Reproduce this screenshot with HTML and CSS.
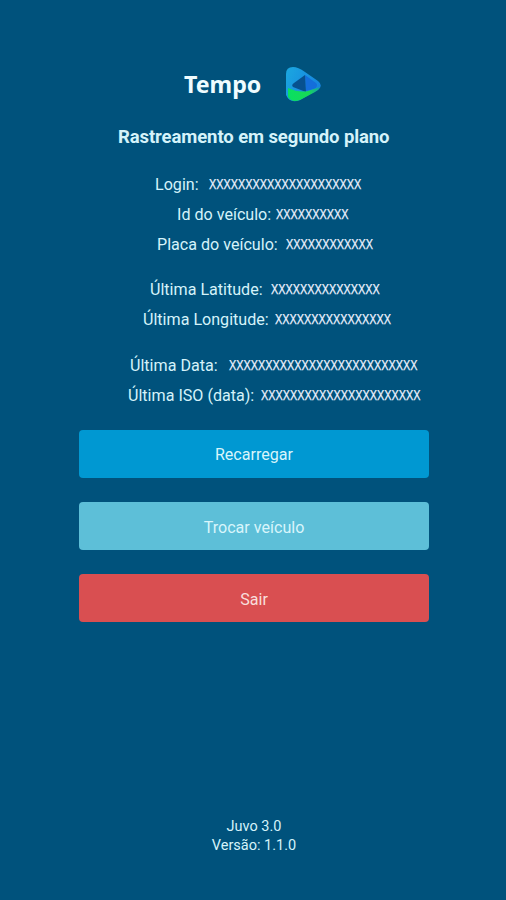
FILE: index.html
```html
<!DOCTYPE html>
<html lang="pt-BR">
<head>
<meta charset="utf-8">
<title>Tempo</title>
<link rel="stylesheet" href="styles.css">
</head>
<body>
<main class="screen">
  <header class="brand">
    <h1 class="brand-name">Tempo</h1>
    <svg class="logo" width="37" height="38" viewBox="0 0 37 38">
      <defs>
        <linearGradient id="sky" x1="0" y1="0" x2="1" y2="0.5"><stop offset="0" stop-color="#1ba8e0"/><stop offset="1" stop-color="#1683df"/></linearGradient>
        <linearGradient id="leaf" x1="0" y1="0" x2="1" y2="0"><stop offset="0" stop-color="#08df62"/><stop offset="0.65" stop-color="#18da55"/><stop offset="1" stop-color="#169dad"/></linearGradient>
      </defs>
      <path fill="url(#sky)" d="M1 8Q1 1 8 1Q13 1 20 6L33 15Q38 19 34 23L15 34Q5 38 1 29Z"/>
      <path fill="#146edb" d="M20 9L31 17Q34 20 29 23L21 25Z"/>
      <path fill="#07518f" d="M20 9L21 26L8 21Q6 19 9 17Z"/>
      <path fill="url(#leaf)" d="M3 22Q14 27 23 25L35 21Q34 24 30 26L15 34Q7 37 3 31Z"/>
    </svg>
  </header>
  <h2 class="subtitle">Rastreamento em segundo plano</h2>
  <dl class="details">
    <div class="row login"><dt>Login:</dt><dd>XXXXXXXXXXXXXXXXXXXXX</dd></div>
    <div class="row vehicle"><dt>Id do veículo:</dt><dd>XXXXXXXXXX</dd></div>
    <div class="row plate"><dt>Placa do veículo:</dt><dd>XXXXXXXXXXXX</dd></div>
    <div class="row latitude"><dt>Última Latitude:</dt><dd>XXXXXXXXXXXXXXX</dd></div>
    <div class="row longitude"><dt>Última Longitude:</dt><dd>XXXXXXXXXXXXXXXX</dd></div>
    <div class="row date"><dt>Última Data:</dt><dd>XXXXXXXXXXXXXXXXXXXXXXXXXX</dd></div>
    <div class="row iso"><dt>Última ISO (data):</dt><dd>XXXXXXXXXXXXXXXXXXXXXX</dd></div>
  </dl>
  <div class="actions">
    <button class="button reload">Recarregar</button>
    <button class="button change">Trocar veículo</button>
    <button class="button exit">Sair</button>
  </div>
  <footer class="version"><div>Juvo 3.0</div><div>Versão: 1.1.0</div></footer>
</main>
</body>
</html>
```
FILE: styles.css
```css
* { box-sizing: border-box; }
body { margin: 0; background: #00527c; color: #d5f3fa; font-family: Roboto, sans-serif; }
.screen { height: 900px; display: flex; flex-direction: column; }
.brand { display: flex; align-items: center; height: 38px; margin: 66px 0 0 184px; gap: 24px; }
.brand-name { margin: 0; font: 700 23.2px/36px "Noto Sans", sans-serif; color: #effcff; width: 77px; height: 38px; white-space: nowrap; }
.logo { flex: none; }
.subtitle { margin: 18px 0 0 118px; font-size: 18.5px; line-height: 30px; font-weight: 700; white-space: nowrap; letter-spacing: -0.1px; }
.details { margin: 18px 0 0; }
.row { display: flex; height: 29.8px; line-height: 29.8px; white-space: nowrap; }
dt { font-size: 16.1px; flex: none; }
dd { margin: 0; font: 14.5px/28px "Liberation Sans", sans-serif; color: #eef2ff; -webkit-text-stroke: 0.25px #eef2ff; transform: scaleX(0.75); transform-origin: left; }
.login { margin-left: 155px; } .login dt { width: 54px; }
.vehicle { margin-left: 177px; } .vehicle dt { width: 99px; }
.plate { margin-left: 157px; } .plate dt { width: 129px; }
.latitude { margin: 16px 0 0 150px; } .latitude dt { width: 121px; }
.longitude { margin-left: 143px; } .longitude dt { width: 132px; }
.date { margin: 16px 0 0 130px; } .date dt { width: 99px; }
.iso { margin-left: 128px; } .iso dt { width: 133px; }
.actions { display: flex; flex-direction: column; gap: 24px; width: 350px; margin: 19px 0 0 79px; }
.button { height: 48.3px; border: 0; border-radius: 4px; padding: 2px 0 0; font: 16.1px Roboto, sans-serif; color: #d8f5fb; }
.reload { background: #0098d2; }
.change { background: #5dbfd8; }
.exit { background: #d94f51; color: #f8dedc; }
.version { margin: auto 0 45px; padding-left: 2px; text-align: center; font-size: 14.5px; line-height: 18.5px; }
```
